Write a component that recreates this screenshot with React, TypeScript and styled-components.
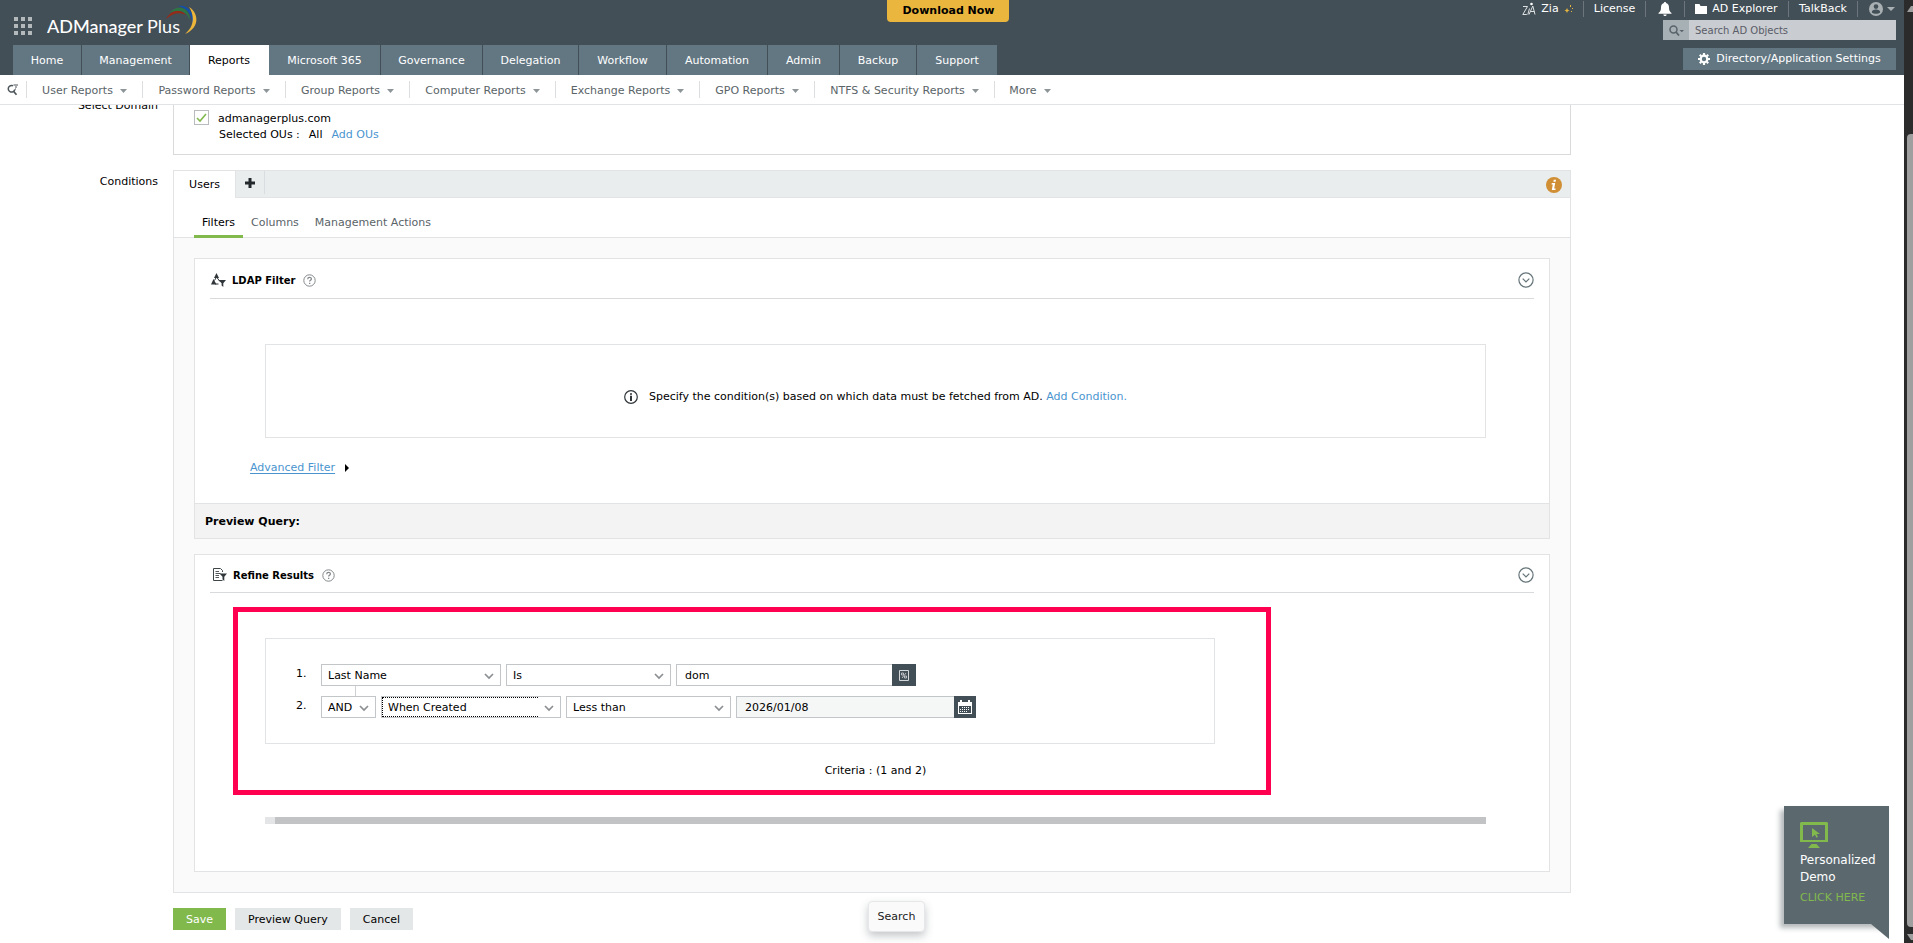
import React from "react";
import styled, { createGlobalStyle } from "styled-components";

const c = {
  header: "#434f57",
  tab: "#637783",
  link: "#4a95cf",
  green: "#82b94d",
  line: "#e2e3e4",
  text: "#000",
  muted: "#5a6468",
};

const Global = createGlobalStyle`
  *, *::before, *::after { box-sizing: border-box; }
  body {
    margin: 0;
    background: #fff;
    color: ${c.text};
    font-family: "DejaVu Sans", Verdana, sans-serif;
    font-size: 11px;
    line-height: 16px;
  }
  button, input, select { font: inherit; color: inherit; margin: 0; }
  button { cursor: pointer; border: 0; background: none; padding: 0; }
  a { color: ${c.link}; text-decoration: none; }
  svg { display: block; flex: none; }
`;

const Shell = styled.div`
  display: flex;
  height: 100vh;
  overflow: hidden;
`;
const Page = styled.div`
  position: relative;
  flex: 1;
  min-width: 0;
  display: flex;
  flex-direction: column;
`;

/* Window scroll bar */
const Rail = styled.div`
  width: 9px;
  flex: none;
  display: flex;
  flex-direction: column;
  align-items: flex-end;
  background: #2b2b2b;
`;
const RailThumb = styled.div`
  width: 6px;
  flex: 1;
  margin: 122px 0 7px;
  border-radius: 4px 0 0 4px;
  background: #9f9f9f;
`;

/* Header */
const Header = styled.header`
  background: ${c.header};
  color: #fff;
  height: 75px;
  flex: none;
  padding-right: 8px;
  display: grid;
  grid-template-columns: 1fr auto 1fr;
  grid-template-rows: 45px 30px;
`;
const Brand = styled.a`
  display: flex;
  align-items: flex-start;
  color: #fff;
  padding: 5px 0 0 14px;
`;
const Dots = styled.div`
  display: grid;
  grid-template-columns: repeat(3, 4px);
  gap: 3px;
  margin: 12px 15px 0 0;
  span {
    height: 4px;
    background: #b4b9bc;
  }
`;
const BrandName = styled.span`
  font-family: Lato, sans-serif;
  font-size: 18px;
  line-height: 24px;
  font-weight: 500;
  margin: 9px -14px 0 0;
  white-space: nowrap;
  span {
    font-weight: 400;
  }
`;
const Download = styled.button`
  height: 22px;
  padding: 0 14px 0 15px;
  background: #ebb63d;
  color: #000;
  font-weight: 700;
  border-radius: 0 0 4px 4px;
`;
const Tools = styled.div`
  display: flex;
  flex-direction: column;
  align-items: flex-end;
  grid-row: 1 / 3;
  grid-column: 3;
`;
const ToolRow = styled.div`
  display: flex;
  height: 20px;
  padding-top: 1px;
`;
const Tool = styled.button<{ $w: number }>`
  display: flex;
  align-items: center;
  justify-content: center;
  gap: 5px;
  width: ${(p) => p.$w}px;
  height: 16px;
  white-space: nowrap;
  border-left: 1px solid #6b757b;
  &:first-child {
    border-left: 0;
  }
  &:last-child {
    justify-content: flex-end;
    padding-right: 1px;
    gap: 4px;
  }
`;
const SearchBox = styled.div`
  display: flex;
  width: 233px;
  height: 20px;
  color: #4d565c;
`;
const SearchType = styled.button`
  width: 26px;
  background: #a7b0b5;
  display: flex;
  align-items: center;
  justify-content: center;
`;
const SearchInput = styled.input`
  flex: 1;
  min-width: 0;
  border: 0;
  padding: 1px 6px 0;
  background: #c9ccd0;
  font-size: 10px;
  &::placeholder {
    color: #5a5d68;
    opacity: 1;
  }
`;
const Settings = styled.button`
  display: flex;
  align-items: center;
  justify-content: center;
  gap: 6px;
  width: 213px;
  height: 22px;
  margin-top: 8px;
  background: ${c.tab};
  white-space: nowrap;
`;
const Tabs = styled.nav`
  grid-column: 1 / 3;
  grid-row: 2;
  display: flex;
  padding-left: 13px;
`;
const Tab = styled.a<{ $w: number; $active?: boolean }>`
  width: ${(p) => p.$w}px;
  padding-top: 8px;
  height: 30px;
  text-align: center;
  white-space: nowrap;
  color: ${(p) => (p.$active ? "#000" : "#fff")};
  background: ${(p) => (p.$active ? "#fff" : c.tab)};
  border-right: 1px solid ${(p) => (p.$active ? "#fff" : c.header)};
  &:last-child {
    border-right: 0;
  }
`;

/* Report categories */
const SubNav = styled.nav`
  height: 30px;
  flex: none;
  display: flex;
  align-items: flex-start;
  padding: 6px 0 0 7px;
  border-bottom: 1px solid ${c.line};
`;
const SubSearch = styled.button`
  width: 19px;
  height: 17px;
  display: flex;
  align-items: center;
`;
const SubItem = styled.a<{ $w: number }>`
  display: flex;
  align-items: center;
  justify-content: center;
  gap: 7px;
  width: ${(p) => p.$w}px;
  height: 17px;
  padding-top: 2px;
  border-left: 1px solid #dcdedf;
  color: ${c.muted};
  white-space: nowrap;
`;

/* Scrolled form */
const Viewport = styled.main`
  flex: 1;
  min-height: 0;
  overflow: hidden;
`;
const Form = styled.form`
  margin-top: -21px;
  padding-right: 333px;
  display: grid;
  grid-template-columns: 158px minmax(0, 1fr);
  gap: 15px;
`;
const Label = styled.div<{ $top: number }>`
  padding-top: ${(p) => p.$top}px;
  text-align: right;
`;
const DomainBox = styled.div`
  border: 1px solid #d9dadb;
  padding: 25px 20px 12px;
`;
const DomainRow = styled.label`
  display: flex;
  gap: 9px;
  height: 16px;
  line-height: 18px;
`;
const Check = styled.input`
  appearance: none;
  width: 15px;
  height: 15px;
  border: 1px solid #b9bcbe;
  background: #fff
    url("data:image/svg+xml,%3Csvg xmlns='http://www.w3.org/2000/svg' viewBox='0 0 13 13'%3E%3Cpath d='M2 7l3 3 6-7' fill='none' stroke='%2382b94d' stroke-width='1.6'/%3E%3C/svg%3E")
    center / 13px 13px;
`;
const OuRow = styled.div`
  display: flex;
  gap: 9px;
  height: 16px;
  line-height: 18px;
  padding-left: 25px;
`;
const Panel = styled.div`
  border: 1px solid ${c.line};
`;
const Strip = styled.div`
  display: flex;
  height: 27px;
`;
const UsersTab = styled.button`
  width: 61px;
`;
const StripRest = styled.div`
  flex: 1;
  display: flex;
  justify-content: space-between;
  background: #e9edee;
  border-left: 1px solid ${c.line};
  border-bottom: 1px solid ${c.line};
`;
const AddTab = styled.button`
  width: 29px;
  height: 23px;
  padding: 0 0 6px 9px;
  display: flex;
  align-items: flex-end;
  border-right: 1px solid #d9dddf;
`;
const InfoButton = styled.button`
  width: 32px;
  padding: 2px 8px 0 0;
  display: flex;
  align-items: center;
  justify-content: flex-end;
`;
const InnerTabs = styled.div`
  display: flex;
  height: 40px;
  padding-left: 20px;
  border-bottom: 1px solid ${c.line};
`;
const InnerTab = styled.button<{ $active?: boolean }>`
  height: 40px;
  padding: 12px 8px 0;
  white-space: nowrap;
  color: ${(p) => (p.$active ? "#000" : c.muted)};
  border-bottom: 3px solid ${(p) => (p.$active ? c.green : "transparent")};
`;
const PanelBody = styled.div`
  background: #fafafa;
  padding: 20px;
  display: grid;
  gap: 15px;
`;
const Card = styled.section`
  background: #fff;
  border: 1px solid ${c.line};
`;
const CardHead = styled.div<{ $h: number }>`
  display: flex;
  align-items: center;
  height: ${(p) => p.$h}px;
  margin: 0 15px;
  padding: 3px 0 0 1px;
  border-bottom: 1px solid #d9dadb;
`;
const CardTitle = styled.h2`
  margin: 0 8px 0 6px;
  padding-top: 1px;
  font-size: 10px;
  line-height: 16px;
  font-weight: 700;
`;
const Toggle = styled.button`
  margin-left: auto;
`;
const Message = styled.div`
  display: flex;
  align-items: center;
  justify-content: center;
  height: 94px;
  margin: 45px 63px 22px 70px;
  padding-top: 11px;
  border: 1px solid ${c.line};
  white-space: pre;
  svg {
    margin-right: 11px;
  }
`;
const Advanced = styled.div`
  display: flex;
  align-items: center;
  gap: 10px;
  margin: 0 0 27px 55px;
  a {
    text-decoration: underline;
    text-underline-offset: 2px;
  }
`;
const Preview = styled.div`
  height: 35px;
  padding: 10px 10px 8px;
  background: #f3f3f3;
  border-top: 1px solid ${c.line};
  font-weight: 700;
`;
const RefineBody = styled.div`
  position: relative;
  padding: 45px 63px 47px 70px;
`;
const Highlight = styled.div`
  position: absolute;
  inset: 14px 278px auto 38px;
  height: 188px;
  border: 5px solid #ff0050;
  pointer-events: none;
`;
const Rules = styled.ol`
  list-style: none;
  margin: 0 271px 0 0;
  padding: 25px 0 25px 30px;
  border: 1px solid ${c.line};
`;
const Rule = styled.li`
  display: flex;
  height: 22px;
`;
const RuleNo = styled.span`
  width: 25px;
  padding-top: 2px;
`;
const Connector = styled.li`
  height: 10px;
  width: 60px;
  border-right: 1px solid #cfd2d4;
`;
const SelectWrap = styled.span<{ $w: number; $focus?: boolean }>`
  position: relative;
  width: ${(p) => p.$w}px;
  margin-right: 5px;
  select {
    appearance: none;
    width: 100%;
    height: 22px;
    padding: 1px 20px 0 6px;
    border: 1px solid #c3c6c8;
    border-radius: 0;
    background: #fff;
    outline: 0;
  }
  svg {
    position: absolute;
    right: 7px;
    top: 9px;
    pointer-events: none;
  }
  &::after {
    content: "";
    display: ${(p) => (p.$focus ? "block" : "none")};
    position: absolute;
    inset: 1px 23px 1px 1px;
    border: 1px dotted #000;
    border-right: 0;
    pointer-events: none;
  }
`;
const Field = styled.input<{ $w: number }>`
  width: ${(p) => p.$w}px;
  height: 22px;
  padding: 0 8px;
  border: 1px solid #c3c6c8;
  border-right: 0;
  border-radius: 0;
  background: #fff;
  &:read-only {
    background: #f5f7f6;
  }
`;
const FieldButton = styled.button<{ $w: number }>`
  width: ${(p) => p.$w}px;
  height: 22px;
  display: flex;
  align-items: center;
  justify-content: center;
  background: ${c.header};
`;
const Criteria = styled.div`
  margin: 19px 0 38px;
  text-align: center;
`;
const HScroll = styled.div`
  height: 7px;
  padding-left: 10px;
  background: #e4e5e6;
  div {
    height: 7px;
    background: #c2c3c4;
  }
`;
const Actions = styled.div`
  grid-column: 2;
  display: flex;
  gap: 9px;
`;
const Action = styled.button<{ $primary?: boolean }>`
  height: 22px;
  padding: 1px 13px 0;
  background: ${(p) => (p.$primary ? c.green : "#e4e7e8")};
  color: ${(p) => (p.$primary ? "#fff" : "#000")};
`;

/* Floating parts */
const SearchTip = styled.div`
  position: absolute;
  left: calc(50% - 84px);
  bottom: 11px;
  width: 57px;
  height: 31px;
  line-height: 30px;
  text-align: center;
  color: #222;
  background: #fafafa;
  border: 1px solid #e6e7e8;
  border-radius: 4px;
  box-shadow: 0 4px 8px rgba(60, 70, 75, 0.3);
`;
const Demo = styled.a`
  position: absolute;
  right: 15px;
  bottom: 19px;
  width: 105px;
  height: 118px;
  padding: 16px 0 0 16px;
  background: #5b696f;
  color: #fff;
  box-shadow: -4px 4px 5px rgba(70, 80, 85, 0.4);
  b {
    display: block;
    margin: 4px 0 4px;
    font-size: 12px;
    line-height: 17px;
    font-weight: 400;
  }
  span {
    color: ${c.green};
  }
  &::after {
    content: "";
    position: absolute;
    right: 0;
    top: 118px;
    border-top: 15px solid #5b696f;
    border-left: 18px solid transparent;
  }
`;

const Caret = ({ w = 7, fill = "#8d9598" }: { w?: number; fill?: string }) => (
  <svg width={w} height="4" viewBox="0 0 8 4" preserveAspectRatio="none">
    <path d="M0 0h8L4 4z" fill={fill} />
  </svg>
);

const Chevron = () => (
  <svg width="10" height="7" viewBox="0 0 10 7">
    <path d="M1 1l4 4 4-4" fill="none" stroke="#8b8f92" strokeWidth="1.7" />
  </svg>
);

const Help = () => (
  <svg width="13" height="13" viewBox="0 0 13 13" fill="none" stroke="#83888b">
    <circle cx="6.5" cy="6.5" r="5.7" />
    <path d="M4.7 5.2c0-2.4 3.7-2.3 3.7-.2 0 1.3-1.8 1.3-1.8 2.6" strokeWidth="1.2" />
    <path d="M6 8.8h1.3v1.1H6z" fill="#83888b" stroke="none" />
  </svg>
);

const CircleDown = () => (
  <svg width="16" height="16" viewBox="0 0 16 16" fill="none" stroke="#66757a" strokeWidth="1.2">
    <circle cx="8" cy="8" r="7.1" />
    <path d="M4.7 6.6L8 9.9l3.3-3.3" />
  </svg>
);

const Swoosh = () => (
  <svg width="32" height="31" viewBox="0 0 32 31">
    <path d="M0 14C5 5 14 3 20 10c-7-3-13-2-20 4z" fill="#952b17" />
    <path d="M3 8C12-1 23 2 24 15 20 5 12 4 3 8z" fill="#2e7745" />
    <path d="M12 1c10-2 17 7 15 19C25 8 21 3 12 1z" fill="#1450a8" />
    <path d="M23 2c9 5 12 20-4 27 9-7 10-18 4-27z" fill="#edb63b" />
  </svg>
);

const Zia = () => (
  <svg width="14" height="14" viewBox="0 0 14 14" fill="none" stroke="#dfe2e3">
    <path d="M1 4.500h4.500L.8 12.500h4M7.500 6.500L5.800 12.500M7 12.500L10.800 4l2.200 8.500M8.500 9.500h4" />
    <circle cx="9.500" cy="2" r="1.300" fill="#fff" stroke="none" />
  </svg>
);

const Sparkle = () => (
  <svg width="9" height="9" viewBox="0 0 9 9" fill="#e5b53f">
    <path d="M3 3l.8 1.700L5.500 5.500l-1.700.8L3 8 2.200 6.300.5 5.500l1.700-.8z" />
    <path d="M6 0h1v2H6zM8 3h1v1H8zM7 6h1v1H7z" />
  </svg>
);

const Bell = () => (
  <svg width="14" height="14" viewBox="0 0 14 14" fill="#fff">
    <path d="M7 0c.7 0 1.100.4 1.100 1.100C10.300 1.700 11 3.500 11 5.500c0 3 .7 4 2.500 5.500v.8H.5V11C2.300 9.500 3 8.500 3 5.500c0-2 .7-3.800 2.900-4.400C5.900.4 6.300 0 7 0zM5.300 12.500h3.400c-.2 1-.9 1.500-1.700 1.500s-1.500-.5-1.700-1.500z" />
  </svg>
);

const Folder = () => (
  <svg width="12" height="10" viewBox="0 0 12 10" fill="#fff">
    <path d="M0 0h4.500l1 2H12v1H0zM0 3h12v7H0z" />
  </svg>
);

const User = () => (
  <svg width="14" height="14" viewBox="0 0 14 14">
    <circle cx="7" cy="7" r="7" fill="#a9b0b4" />
    <circle cx="7" cy="4.600" r="2.300" fill={c.header} />
    <path d="M2.800 10.500c0-2.200 1.700-3 4.200-3s4.200.8 4.200 3c-2 1.700-6.400 1.700-8.400 0z" fill={c.header} />
  </svg>
);

const Gear = () => (
  <svg width="12" height="12" viewBox="0 0 12 12" fill="none" stroke="#fff">
    <circle cx="6" cy="6" r="3.300" strokeWidth="2.200" />
    <path
      d="M6 0v2M6 10v2M0 6h2M10 6h2M1.800 1.800l1.400 1.400M8.800 8.800l1.400 1.400M1.800 10.200l1.400-1.400M8.800 3.200l1.400-1.400"
      strokeWidth="2.200"
    />
  </svg>
);

const LdapIcon = () => (
  <svg width="15" height="15" viewBox="0 0 15 15" fill="#30363a">
    <path d="M5.500 0L8 5H3zM2.500 6L5.500 11.500H0z" />
    <path d="M3.500 7.500L5.500 4l3.500 4.500M4 11h3.500" fill="none" stroke="#30363a" />
    <path d="M7.500 7H15l-2.700 3.300V14l-1.700-1.500v-2.200z" />
  </svg>
);

const RefineIcon = () => (
  <svg width="16" height="14" viewBox="-2 0 16 14" fill="none" stroke="#3f464a">
    <path d="M9.500 4V2.500l-2-2h-7v12h9" />
    <path d="M2.500 3.500H6M2.500 5.500h5M2.500 7.500H6M2.500 9.500H6" strokeWidth=".9" />
    <path d="M6.500 5.500H14l-2.700 3.300V13L9.500 11.500V8.800z" fill="#30363a" stroke="none" />
  </svg>
);

const ManageIcon = () => (
  <svg width="10" height="11" viewBox="0 0 10 11" fill="none" stroke="#d5d8da">
    <path d="M.5.5h9v10h-9z" />
    <path d="M3 8l4-5M2.500 3h2v2h-2zM5.500 6h2v2h-2z" strokeWidth=".8" />
  </svg>
);

const CalendarIcon = () => (
  <svg width="14" height="14" viewBox="0 0 14 14" fill="#fff">
    <path d="M0 2h2V0h2v2h6V0h2v2h2v12H0zM1 6v7h12V6z" fillRule="evenodd" />
    <path d="M4 7.500h8M2 9.500h10M2 11.500h7" stroke="#fff" strokeWidth="1" strokeDasharray="1 1" />
  </svg>
);

const tabs: [string, number][] = [
  ["Home", 69], ["Management", 108], ["Reports", 79], ["Microsoft 365", 112],
  ["Governance", 102], ["Delegation", 96], ["Workflow", 88], ["Automation", 101],
  ["Admin", 72], ["Backup", 77], ["Support", 80],
];
const categories: [string, number][] = [
  ["User Reports", 116], ["Password Reports", 143], ["Group Reports", 124],
  ["Computer Reports", 146], ["Exchange Reports", 144], ["GPO Reports", 115],
  ["NTFS & Security Reports", 180], ["More", 71],
];

function Pick({ label, value, w, focus }: { label: string; value: string; w: number; focus?: boolean }) {
  return (
    <SelectWrap $w={w} $focus={focus}>
      <select aria-label={label} defaultValue={value}>
        <option>{value}</option>
      </select>
      <Chevron />
    </SelectWrap>
  );
}

export default function App() {
  return (
    <Shell>
      <Global />
      <Page>
        <Header>
          <Brand href="#">
            <Dots>
              {Array.from({ length: 9 }, (_, i) => <span key={i} />)}
            </Dots>
            <BrandName>ADManager <span>Plus</span></BrandName>
            <Swoosh />
          </Brand>
          <Download type="button">Download Now</Download>
          <Tools>
            <ToolRow>
              <Tool type="button" $w={71}><Zia />Zia<Sparkle /></Tool>
              <Tool type="button" $w={62}>License</Tool>
              <Tool type="button" $w={39} aria-label="Notifications"><Bell /></Tool>
              <Tool type="button" $w={104}><Folder />AD Explorer</Tool>
              <Tool type="button" $w={69}>TalkBack</Tool>
              <Tool type="button" $w={39} aria-label="Account"><User /><Caret w={8} fill="#a9b0b4" /></Tool>
            </ToolRow>
            <SearchBox>
              <SearchType type="button" aria-label="Search type">
                <svg width="15" height="11" viewBox="0 0 15 11" fill="none" stroke="#59636a">
                  <circle cx="4.500" cy="4.500" r="3.500" strokeWidth="1.500" />
                  <path d="M7 7l3 3.500" strokeWidth="1.800" />
                  <path d="M10.500 5H15l-2.200 2.200z" fill="#59636a" stroke="none" />
                </svg>
              </SearchType>
              <SearchInput aria-label="Search AD Objects" placeholder="Search AD Objects" />
            </SearchBox>
            <Settings type="button"><Gear />Directory/Application Settings</Settings>
          </Tools>
          <Tabs>
            {tabs.map(([t, w]) => (
              <Tab key={t} href="#" $w={w} $active={t === "Reports"}>{t}</Tab>
            ))}
          </Tabs>
        </Header>

        <SubNav>
          <SubSearch type="button" aria-label="Search reports">
            <svg width="12" height="12" viewBox="0 0 12 12" fill="none" stroke="#4c555a">
              <path d="M6 1.800A3.300 3.300 0 1 0 7.800 5.500" strokeWidth="1.500" />
              <path d="M6.500 7.200l3 3.500" strokeWidth="1.700" />
              <path d="M6.500 1h4.500M8 3h2M8 5h1" />
            </svg>
          </SubSearch>
          {categories.map(([t, w]) => (
            <SubItem key={t} href="#" $w={w}>{t}<Caret /></SubItem>
          ))}
        </SubNav>

        <Viewport>
          <Form onSubmit={(e) => e.preventDefault()}>
            <Label $top={14}>Select Domain</Label>
            <DomainBox>
              <DomainRow>
                <Check type="checkbox" defaultChecked />
                admanagerplus.com
              </DomainRow>
              <OuRow>
                <span>Selected OUs :</span>
                <span>All</span>
                <a href="#">Add OUs</a>
              </OuRow>
            </DomainBox>

            <Label $top={4}>Conditions</Label>
            <Panel>
              <Strip>
                <UsersTab type="button">Users</UsersTab>
                <StripRest>
                  <AddTab type="button" aria-label="Add tab">
                    <svg width="10" height="10" viewBox="0 0 10 10">
                      <path d="M5 0v10M0 5h10" stroke="#22282b" strokeWidth="3" />
                    </svg>
                  </AddTab>
                  <InfoButton type="button" aria-label="Information">
                    <svg width="16" height="16" viewBox="0 0 16 16">
                      <circle cx="8" cy="8" r="8" fill="#d08f35" />
                      <path d="M7.800 2.800h2.200l-.4 2H7.400zM5.800 6h3.400L8.200 11.500h1.400l-.2 1.500H5.800l1-5.500H5.600z" fill="#fff" />
                    </svg>
                  </InfoButton>
                </StripRest>
              </Strip>
              <InnerTabs>
                <InnerTab type="button" $active>Filters</InnerTab>
                <InnerTab type="button">Columns</InnerTab>
                <InnerTab type="button">Management Actions</InnerTab>
              </InnerTabs>
              <PanelBody>
                <Card>
                  <CardHead $h={40}>
                    <LdapIcon />
                    <CardTitle>LDAP Filter</CardTitle>
                    <Help />
                    <Toggle type="button" aria-label="Collapse LDAP Filter"><CircleDown /></Toggle>
                  </CardHead>
                  <Message>
                    <svg width="14" height="14" viewBox="0 0 14 14">
                      <circle cx="7" cy="7" r="6.300" fill="none" stroke="#30363a" strokeWidth="1.200" />
                      <path d="M6 3.200h2v1.600H6zM6 5.800h2V11H6z" fill="#30363a" />
                    </svg>
                    Specify the condition(s) based on which data must be fetched from AD. <a href="#">Add Condition.</a>
                  </Message>
                  <Advanced>
                    <a href="#">Advanced Filter</a>
                    <svg width="4" height="8" viewBox="0 0 4 8"><path d="M0 0l4 4-4 4z" /></svg>
                  </Advanced>
                  <Preview>Preview Query:</Preview>
                </Card>

                <Card>
                  <CardHead $h={38}>
                    <RefineIcon />
                    <CardTitle>Refine Results</CardTitle>
                    <Help />
                    <Toggle type="button" aria-label="Collapse Refine Results"><CircleDown /></Toggle>
                  </CardHead>
                  <RefineBody>
                    <Rules>
                      <Rule>
                        <RuleNo>1.</RuleNo>
                        <Pick label="Attribute 1" value="Last Name" w={180} />
                        <Pick label="Condition 1" value="Is" w={165} />
                        <Field $w={216} aria-label="Value 1" defaultValue="dom" />
                        <FieldButton type="button" $w={24} aria-label="Choose value"><ManageIcon /></FieldButton>
                      </Rule>
                      <Connector aria-hidden />
                      <Rule>
                        <RuleNo>2.</RuleNo>
                        <Pick label="Operator" value="AND" w={55} />
                        <Pick label="Attribute 2" value="When Created" w={180} focus />
                        <Pick label="Condition 2" value="Less than" w={165} />
                        <Field $w={218} aria-label="Value 2" defaultValue="2026/01/08" readOnly />
                        <FieldButton type="button" $w={22} aria-label="Choose date"><CalendarIcon /></FieldButton>
                      </Rule>
                    </Rules>
                    <Criteria>Criteria : (1 and 2)</Criteria>
                    <HScroll><div /></HScroll>
                    <Highlight />
                  </RefineBody>
                </Card>
              </PanelBody>
            </Panel>

            <Actions>
              <Action type="submit" $primary>Save</Action>
              <Action type="button">Preview Query</Action>
              <Action type="button">Cancel</Action>
            </Actions>
          </Form>
        </Viewport>

        <SearchTip role="tooltip">Search</SearchTip>
        <Demo href="#">
          <svg width="28" height="26" viewBox="0 0 28 26" fill={c.green}>
            <path d="M1 0h26l1 1v19H0V1zM3 3v15h22V3z" fillRule="evenodd" />
            <path d="M11.500 22h5l3.500 4H8zM12 6l8 6h-3.500l1.500 3-1.500.8L15 12.700 12 15z" />
          </svg>
          <b>Personalized<br />Demo</b>
          <span>CLICK HERE</span>
        </Demo>
      </Page>
      <Rail aria-hidden>
        <svg width="6" height="12" viewBox="0 0 6 12"><path d="M0 12l4-6h2v6z" fill="#9f9f9f" /></svg>
        <RailThumb />
        <svg width="6" height="9" viewBox="0 0 6 9"><path d="M0 0h6v6H4z" fill="#9f9f9f" /></svg>
      </Rail>
    </Shell>
  );
}
